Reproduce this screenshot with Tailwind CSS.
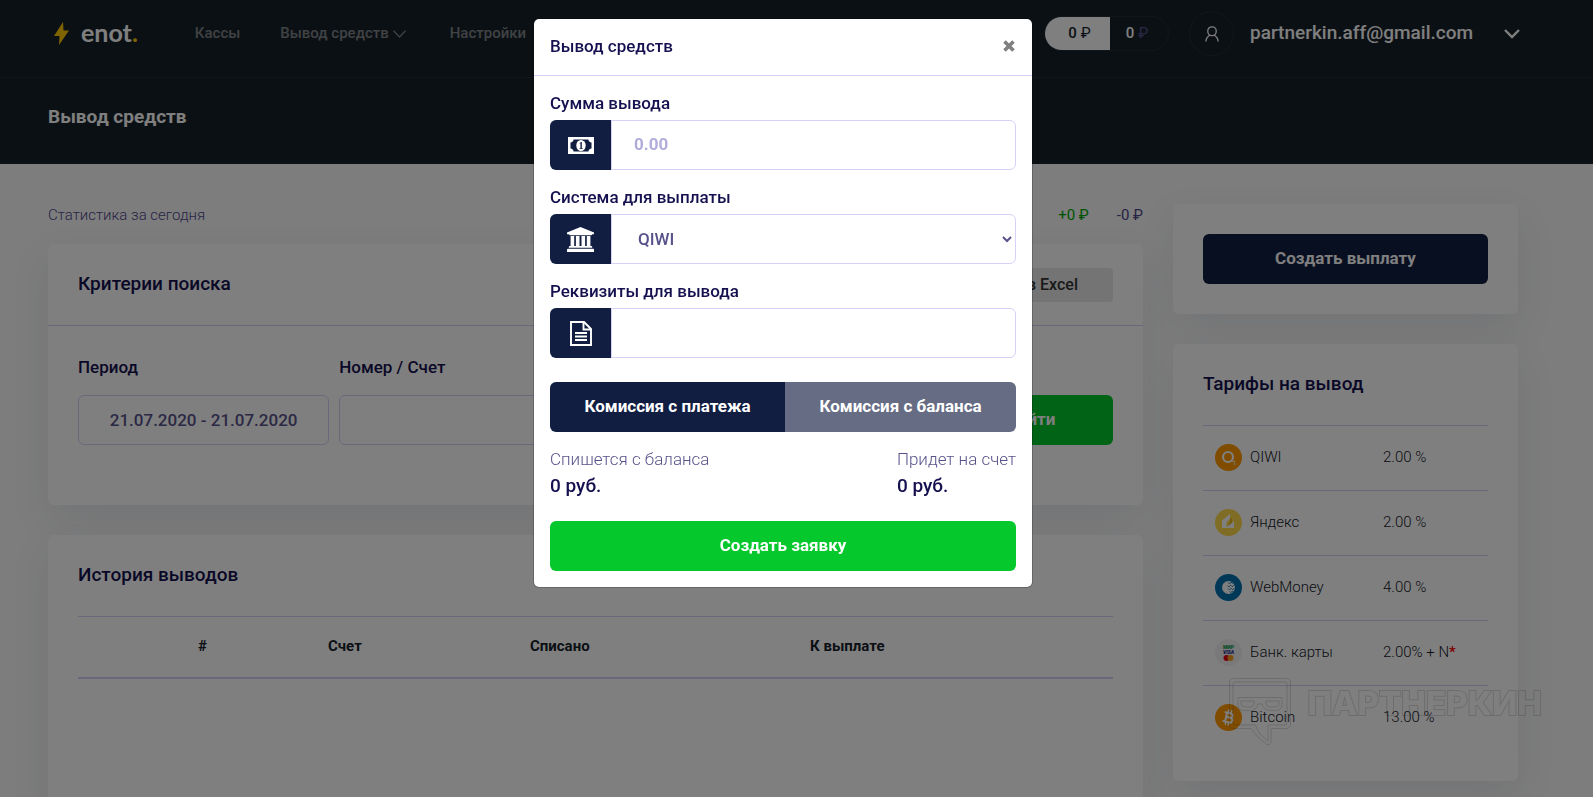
<!DOCTYPE html>
<html lang="ru">
<head>
  <meta charset="UTF-8">
  <meta name="viewport" content="width=device-width, initial-scale=1.0">
  <title>Вывод средств</title>
  <script src="https://cdn.jsdelivr.net/npm/@tailwindcss/browser@4"></script>
</head>
<body class="h-screen overflow-hidden bg-[#fafafa] font-['Roboto','Open_Sans',sans-serif] text-base text-[#16202a]">

  <!-- Header -->
  <header class="bg-[#17212a] text-white">
    <div class="border-b border-white/5">
      <div class="flex h-[77px] items-center pr-[73px] pb-[10px] pl-[54px]">
        <a href="#" class="flex items-center gap-3" aria-label="enot">
          <svg class="h-[23px] w-[15px]" viewBox="0 0 15 23" fill="#ffc800"><path d="M9 0 0 14h5.500L5 23 15 8.500H9.500z"/></svg>
          <span class="pb-1 font-['Lato',sans-serif] text-[25px] leading-8 font-bold">enot<span class="text-[#ffc800]">.</span></span>
        </a>
        <nav class="ml-[57px] flex items-center gap-10 text-[15px] font-medium text-[#818589]">
          <a href="#">Кассы</a>
          <a href="#" class="flex items-center gap-1">Вывод средств
            <svg class="h-2 w-[13px]" viewBox="0 0 13 8" fill="none" stroke="currentColor" stroke-width="1.300"><path d="M.5.800 6.500 7l6-6.200"/></svg>
          </a>
          <a href="#" class="ml-1">Настройки</a>
        </nav>
        <div class="ml-auto flex items-center">
          <div class="flex h-[35px] w-[125px] overflow-hidden rounded-full border border-white/5 text-[15px] font-medium">
            <span class="flex w-[65px] items-center justify-center gap-1 bg-white pl-1 text-[#17212a]">0 <span class="font-normal">₽</span></span>
            <span class="flex flex-1 items-center justify-center gap-1 pr-1">0 <span class="font-normal text-[#55508a]">₽</span></span>
          </div>
          <span class="ml-5 flex size-[45px] items-center justify-center rounded-full border border-white/5">
            <svg class="h-4 w-[14px]" viewBox="0 0 14 16" fill="none" stroke="#fff" stroke-width="1.300"><rect x="2.800" y=".8" width="8.400" height="8.800" rx="4"/><path d="M.8 15.500c.3-3 1.600-4.800 4-6.200M13.200 15.500c-.3-3-1.600-4.800-4-6.200"/></svg>
          </span>
          <button type="button" class="ml-4 flex items-center gap-[31px] text-[19px] font-medium">partnerkin.aff@gmail.com
            <svg class="h-[10px] w-4" viewBox="0 0 16 10" fill="none" stroke="#fff" stroke-width="2.400"><path d="m1 1 7 7 7-7"/></svg>
          </button>
        </div>
      </div>
    </div>
    <div class="flex h-[86px] items-center pb-2 pl-12">
      <h1 class="text-[19px] font-bold">Вывод средств</h1>
    </div>
  </header>

  <!-- Content -->
  <main class="grid grid-cols-[1fr_345px] items-start gap-[30px] pt-10 pr-[75px] pl-12">
    <div>
      <div class="mb-[18px] flex h-[22px] items-center text-[15px] font-light text-[#4e488c]">
        <p>Статистика за сегодня</p>
        <span class="ml-auto font-normal text-[#00a800]">+0 ₽</span>
        <span class="ml-7 font-normal">-0 ₽</span>
      </div>

      <section class="mb-[30px] rounded-md bg-white shadow-[0_15px_40px_rgba(30,60,90,0.09)]">
        <div class="flex h-[82px] items-center justify-between border-b border-[#d6d1f7] px-[30px]">
          <h2 class="text-[19px] font-medium text-[#15104f]">Критерии поиска</h2>
          <button type="button" class="h-[34px] rounded bg-[#e9e9e9] px-[35px] font-medium text-[#333]">Скачать в Excel</button>
        </div>
        <form class="grid h-[179px] grid-cols-[251fr_251fr_338fr_164fr] items-start gap-[10px] px-[30px] pt-[30px]">
          <div class="flex flex-col">
            <label for="period" class="mb-[17px] text-[17px] leading-[22px] font-medium text-[#15104f]">Период</label>
            <input id="period" type="text" value="21.07.2020 - 21.07.2020" class="h-[50px] w-full rounded-md border border-[#d6d1f7] px-4 text-center text-[17px] font-medium text-[#57528a]">
          </div>
          <div class="flex flex-col">
            <label for="number" class="mb-[17px] text-[17px] leading-[22px] font-medium text-[#15104f]">Номер / Счет</label>
            <input id="number" type="text" class="h-[50px] w-full rounded-md border border-[#d6d1f7] px-6">
          </div>
          <div></div>
          <button type="submit" class="mt-[39px] h-[50px] rounded-md bg-[#00c62c] text-[17px] font-bold text-white">Найти</button>
        </form>
      </section>

      <section class="h-[400px] rounded-md bg-white px-[30px] shadow-[0_15px_40px_rgba(30,60,90,0.09)]">
        <h2 class="flex h-[81px] items-center text-[19px] font-medium text-[#15104f]">История выводов</h2>
        <table class="w-full table-fixed border-t border-b-2 border-[#d6d1f7] text-left text-[15px]">
          <thead>
            <tr class="h-[61px]">
              <td class="w-[108px]"></td>
              <th class="w-[130px] px-3 pb-[2px] font-bold">#</th>
              <th class="w-[202px] px-3 pb-[2px] font-bold">Счет</th>
              <th class="w-[280px] px-3 pb-[2px] font-bold">Списано</th>
              <th class="px-3 pb-[2px] font-bold">К выплате</th>
            </tr>
          </thead>
        </table>
      </section>
    </div>

    <aside>
      <section class="mb-[30px] rounded-md bg-white p-[30px] shadow-[0_15px_40px_rgba(30,60,90,0.09)]">
        <button type="button" class="h-[50px] w-full rounded-md bg-[#111e42] text-[17px] font-bold text-white">Создать выплату</button>
      </section>

      <section class="rounded-md bg-white px-[30px] pb-[30px] shadow-[0_15px_40px_rgba(30,60,90,0.09)]">
        <h2 class="flex h-[81px] items-center text-[19px] font-medium text-[#15104f]">Тарифы на вывод</h2>
        <table class="w-full table-fixed text-[15px] font-light">
          <tbody>
            <tr class="h-[65px] border-t border-[#d6d1f7]">
              <td class="w-[168px] pb-[2px] pl-3">
                <div class="flex items-center gap-2">
                  <svg class="size-[27px]" viewBox="0 0 27 27"><circle cx="13.500" cy="13.500" r="13.500" fill="#ff9800"/><circle cx="13" cy="13" r="5" fill="none" stroke="#fff" stroke-width="2.200"/><path d="m15.500 16 4.500 1.200c.8.500.4 1.300-.8 1.200z" fill="#fff"/><path d="M18.500 19.500h2v1h-2z" fill="#fff"/></svg>
                  QIWI
                </div>
              </td>
              <td class="pb-[2px] pl-3">2.00 %</td>
            </tr>
            <tr class="h-[65px] border-t border-[#d6d1f7]">
              <td class="pb-[2px] pl-3">
                <div class="flex items-center gap-2">
                  <svg class="size-[27px]" viewBox="0 0 27 27"><circle cx="13.500" cy="13.500" r="13.500" fill="#ffdb4d"/><path d="M7 11.500 15 5v4.500l-3.500 4V17l7.500-4.500V19H7z" fill="#fff"/><path d="M15 9.500h2V14l-6 4.500 4-5z" fill="#e0b71f"/></svg>
                  Яндекс
                </div>
              </td>
              <td class="pb-[2px] pl-3">2.00 %</td>
            </tr>
            <tr class="h-[65px] border-t border-[#d6d1f7]">
              <td class="pb-[2px] pl-3">
                <div class="flex items-center gap-2">
                  <svg class="size-[27px]" viewBox="0 0 27 27"><circle cx="13.500" cy="13.500" r="13.500" fill="#0072b1"/><circle cx="13.500" cy="13.500" r="6.500" fill="#fff"/><path d="m13 8.500 1.500 1.500L16 8l1.500 1.500L19 8M12.500 11.500l1.500 1.500 1.700-1.800 1.500 1.500 2-1.700M13 14.500l1.500 1.500 1.700-1.800 1.500 1.500 2-1.500M14.500 17.500l1.200 1 1.500-1.200 1.500.7" fill="none" stroke="#0072b1" stroke-width=".8"/></svg>
                  WebMoney
                </div>
              </td>
              <td class="pb-[2px] pl-3">4.00 %</td>
            </tr>
            <tr class="h-[65px] border-t border-[#d6d1f7]">
              <td class="pb-[2px] pl-3">
                <div class="flex items-center gap-2">
                  <svg class="size-[27px]" viewBox="0 0 27 27" font-family="Roboto" font-weight="900" text-anchor="middle"><circle cx="13.500" cy="13.500" r="13.500" fill="#f2f2f2"/><text x="13.500" y="9.500" font-size="5" fill="#0a9b50">МИР</text><text x="13.500" y="15.200" font-size="5" font-style="italic" fill="#1a1f8f">VISA</text><circle cx="11.500" cy="19" r="3" fill="#eb001b"/><circle cx="15.500" cy="19" r="3" fill="#f79e1b"/></svg>
                  Банк. карты
                </div>
              </td>
              <td class="pb-[2px] pl-3">2.00% + N<span class="font-medium text-[#ff0000]">*</span></td>
            </tr>
            <tr class="h-[65px] border-t border-[#d6d1f7]">
              <td class="pb-[2px] pl-3">
                <div class="flex items-center gap-2">
                  <svg class="size-[27px]" viewBox="0 0 27 27"><circle cx="13.500" cy="13.500" r="13.500" fill="#ff9800"/><g transform="rotate(14 13.500 13.500)" stroke="#fff" fill="none"><path stroke-width="2" d="M8.500 9h6.200c3.200 0 3.200 4.300 0 4.300H11h4.300c3.600 0 3.600 4.900 0 4.900H8.500M11 9v9"/><path stroke-width="1.500" d="M12 5.500v3M15 5.500v3M12 18.500v3M15 18.500v3"/></g></svg>
                  Bitcoin
                </div>
              </td>
              <td class="pb-[2px] pl-3">13.00 %</td>
            </tr>
          </tbody>
        </table>
      </section>
    </aside>
  </main>

  <!-- Modal -->
  <div class="fixed inset-0 flex items-start justify-center bg-black/50 pt-[18px] pr-[27px]">
    <div role="dialog" aria-labelledby="modal-title" class="w-[500px] rounded-md border border-black/20 bg-white bg-clip-padding">
      <div class="flex h-[57px] items-center justify-between border-b border-[#d6d1f7] pr-[17px] pb-[2px] pl-4">
        <h5 id="modal-title" class="text-[17px] leading-[22px] font-medium text-[#15104f]">Вывод средств</h5>
        <button type="button" aria-label="Закрыть">
          <svg class="size-3" viewBox="0 0 12 12" stroke="#7f7f7f" stroke-width="3.600"><path d="m1.500 1.500 9 9M10.500 1.500l-9 9"/></svg>
        </button>
      </div>
      <form class="p-4">
        <div class="mb-4">
          <label for="amount" class="mb-[6px] block text-[17px] leading-[22px] font-medium text-[#15104f]">Сумма вывода</label>
          <div class="flex h-[50px]">
            <span class="flex w-[61px] items-center justify-center rounded-l-md bg-[#111e42]">
              <svg class="h-[17px] w-[26px]" viewBox="0 0 26 17"><path fill="#fff" d="M0 0h26v17H0z"/><path fill="#111e42" d="M5.500 2.500h15c0 1.600 1.200 3 3 3v6c-1.800 0-3 1.400-3 3h-15c0-1.600-1.200-3-3-3v-6c1.800 0 3-1.400 3-3z"/><ellipse cx="13" cy="8.500" rx="4.700" ry="5.500" fill="#fff"/><text x="13" y="12" text-anchor="middle" font-family="Liberation Serif" font-weight="bold" font-size="10" fill="#111e42">1</text></svg>
            </span>
            <input id="amount" type="text" placeholder="0.00" class="min-w-0 flex-1 rounded-r-md border border-[#d6d1f7] px-[22px] text-[17px] font-bold text-[#57528a] placeholder:text-[#b1addb]">
          </div>
        </div>
        <div class="mb-4">
          <label for="system" class="mb-[6px] block text-[17px] leading-[22px] font-medium text-[#15104f]">Система для выплаты</label>
          <div class="flex h-[50px]">
            <span class="flex w-[61px] items-center justify-center rounded-l-md bg-[#111e42]">
              <svg class="h-[25px] w-[27px]" viewBox="0 0 27 25" fill="#fff"><path d="M13.500 0 27 5.500v1.800h-1.800c0 .5-.4.900-1 .9H2.800c-.6 0-1-.4-1-.9H0V5.500zM3.600 9h3.600v10h1.700V9h3.600v10h2V9h3.600v10h1.700V9h3.600v10h.8c.6 0 1 .4 1 .9v.9H1.800v-.9c0-.5.4-.9 1-.9h.8zM1 21.800h25c.6 0 1 .4 1 .9V25H0v-2.300c0-.5.4-.9 1-.9z"/></svg>
            </span>
            <select id="system" class="min-w-0 flex-1 rounded-r-md border border-[#d6d1f7] bg-white pl-[22px] text-[17px] font-medium text-[#57528a]">
              <option>QIWI</option>
              <option>Яндекс</option>
              <option>WebMoney</option>
              <option>Банк. карты</option>
              <option>Bitcoin</option>
            </select>
          </div>
        </div>
        <div class="mb-6">
          <label for="details" class="mb-[6px] block text-[17px] leading-[22px] font-medium text-[#15104f]">Реквизиты для вывода</label>
          <div class="flex h-[50px]">
            <span class="flex w-[61px] items-center justify-center rounded-l-md bg-[#111e42]">
              <svg class="h-[25px] w-[22px]" viewBox="0 0 22 25" fill="none" stroke="#fff" stroke-width="1.900"><path d="M1 1h13l7 7v16H1z"/><path d="M13.500 1v7.500H21M5 12h12M5 15.500h12M5 19h12"/></svg>
            </span>
            <input id="details" type="text" class="min-w-0 flex-1 rounded-r-md border border-[#d6d1f7] px-[22px] text-[17px] font-medium text-[#57528a]">
          </div>
        </div>
        <div class="mb-4 flex h-[50px] overflow-hidden rounded-md text-[17px] font-bold text-white">
          <button type="button" class="flex-auto bg-[#111e42]">Комиссия с платежа</button>
          <button type="button" class="flex-auto bg-[#656c83]">Комиссия с баланса</button>
        </div>
        <div class="mb-[21px] flex justify-between text-[#57528a]">
          <div>
            <p class="mb-[2px] text-[17px] leading-[22px] font-light">Спишется с баланса</p>
            <p class="text-[19px] leading-7 font-medium text-[#15104f]">0 руб.</p>
          </div>
          <div>
            <p class="mb-[2px] text-[17px] leading-[22px] font-light">Придет на счет</p>
            <p class="text-[19px] leading-7 font-medium text-[#15104f]">0 руб.</p>
          </div>
        </div>
        <button type="submit" class="h-[50px] w-full rounded-md bg-[#05c82d] text-[17px] font-bold text-white">Создать заявку</button>
      </form>
    </div>
  </div>

  <!-- Watermark -->
  <div class="pointer-events-none absolute right-[51px] bottom-[51px] flex items-start gap-4 mix-blend-multiply">
    <svg class="h-[68px] w-[62px]" viewBox="0 0 62 68" fill="none" stroke="#dadada" stroke-width="1"><path d="M5 .5h52q4.500 0 4.500 4.500v41q0 4.500-4.500 4.500H42V64q-1 4-4 2.500Q29 61 22 50.500H5Q.5 50.500.5 46V5Q.5.500 5 .5z"/><path d="M6 4h50q2 0 2 2v39q0 2-2 2H39v16q-9-6-12.500-16H6q-2 0-2-2V6q0-2 2-2z"/><path d="M9 19.500h44V26q0 6.500-6 6.500h-6q-6 0-8-6.500h-4q-2 6.500-8 6.500h-6q-6 0-6-6.500z"/><path d="M12 23h13v3q-1 3-4 3h-5q-4 0-4-3zM37 23h13v3q0 3-4 3h-5q-3 0-4-3z"/></svg>
    <span class="pt-[9px] font-['Inter',sans-serif] text-[33px] leading-8 font-extrabold text-white [-webkit-text-stroke:2px_#dadada] [paint-order:stroke]">ПАРТНЕРКИН</span>
  </div>

</body>
</html>
